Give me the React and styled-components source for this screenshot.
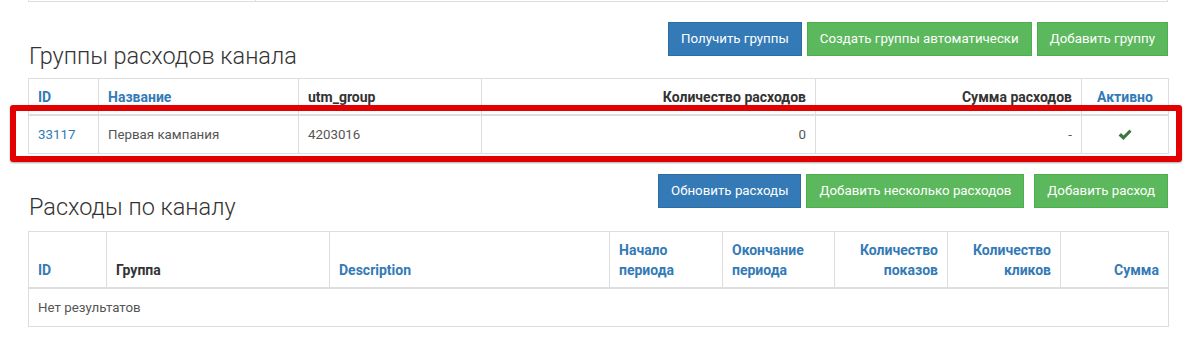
import React from 'react'
import styled, { createGlobalStyle } from 'styled-components'

const GlobalStyle = createGlobalStyle`
  body {
    margin: 0;
    background: #ffffff;
    font-family: Roboto, "Liberation Sans", Arial, sans-serif;
    font-size: 13.3px;
    line-height: 20px;
    color: #555555;
  }
  * { box-sizing: border-box; }
`

const Page = styled.div`
  width: 1140px;
  margin-left: 28px;
`

const PrevTable = styled.div`
  display: flex;
  height: 2px;
  border: 1px solid #dddddd;
  border-top: none;
`

const PrevCell = styled.div`
  width: ${p => p.$w || 'auto'};
  flex: ${p => (p.$w ? 'none' : 1)};
  border-right: ${p => (p.$last ? 'none' : '1px solid #dddddd')};
`

const Section = styled.section`
  margin-top: ${p => p.$top || 20}px;
`

const TitleBar = styled.div`
  display: flex;
  justify-content: space-between;
  align-items: flex-start;
  margin-bottom: ${p => p.$gap || 10}px;
`

const Title = styled.h3`
  margin: ${p => p.$top || 22}px 0 0 1px;
  font-size: 23.5px;
  line-height: 24px;
  font-weight: 300;
  color: #333333;
`

const Toolbar = styled.div`
  display: flex;
  gap: 5px;
`

const Button = styled.button`
  height: 34px;
  padding: 6px 12px;
  margin-left: ${p => p.$push || 0}px;
  border: 1px solid ${p => (p.$variant === 'primary' ? '#2e6da4' : '#4cae4c')};
  background: ${p => (p.$variant === 'primary' ? '#337ab7' : '#5cb85c')};
  color: #ffffff;
  font-family: inherit;
  font-size: 13.3px;
  line-height: 20px;
  border-radius: 0;
  cursor: pointer;
  white-space: nowrap;
`

const TableWrap = styled.div`
  position: relative;
`

const Table = styled.table`
  width: 100%;
  table-layout: fixed;
  border-collapse: collapse;
  border: 1px solid #dddddd;
`

const Th = styled.th`
  padding: 8px 9px 7px;
  border: 1px solid #dddddd;
  border-bottom: 2px solid #dddddd;
  vertical-align: bottom;
  text-align: ${p => p.$align || 'left'};
  font-size: 14px;
  font-weight: 700;
  color: ${p => (p.$link ? '#337ab7' : '#333333')};
`

const Td = styled.td`
  padding: 9px 9px 8px;
  border: 1px solid #dddddd;
  vertical-align: middle;
  text-align: ${p => p.$align || 'left'};
  color: ${p => (p.$link ? '#337ab7' : '#555555')};
`

const Highlight = styled.div`
  position: absolute;
  top: 27px;
  left: -18px;
  right: -14px;
  height: 57px;
  border: 6px solid #e30000;
  border-radius: 3px;
  box-shadow: 0 1px 2px rgba(0, 0, 0, 0.35);
  pointer-events: none;
`

const Check = () => (
  <svg width="14" height="12" viewBox="0 0 14 12" style={{ verticalAlign: 'middle' }}>
    <path d="M0.5 6.5 L3 4 L5.5 6.5 L11.5 0.5 L13.5 2.8 L5.5 11 Z" fill="#3c763d" />
  </svg>
)

const groupCols = [70, 200, 183, 334, 266, 87]
const costCols = [78, 223, 280, 113, 112, 113, 113, 108]

export default function App() {
  return (
    <>
      <GlobalStyle />
      <Page>
        <PrevTable>
          <PrevCell $w="227px" />
          <PrevCell $last />
        </PrevTable>

        <Section>
          <TitleBar>
            <Title>Группы расходов канала</Title>
            <Toolbar>
              <Button $variant="primary">Получить группы</Button>
              <Button>Создать группы автоматически</Button>
              <Button>Добавить группу</Button>
            </Toolbar>
          </TitleBar>
          <TableWrap>
            <Table>
              <colgroup>
                {groupCols.map((w, i) => <col key={i} style={{ width: w }} />)}
              </colgroup>
              <thead>
                <tr>
                  <Th $link>ID</Th>
                  <Th $link>Название</Th>
                  <Th>utm_group</Th>
                  <Th $align="right">Количество расходов</Th>
                  <Th $align="right">Сумма расходов</Th>
                  <Th $link $align="center">Активно</Th>
                </tr>
              </thead>
              <tbody>
                <tr>
                  <Td $link>33117</Td>
                  <Td>Первая кампания</Td>
                  <Td>4203016</Td>
                  <Td $align="right">0</Td>
                  <Td $align="right">-</Td>
                  <Td $align="center"><Check /></Td>
                </tr>
              </tbody>
            </Table>
            <Highlight />
          </TableWrap>
        </Section>

        <Section $top={20}>
          <TitleBar $gap={12}>
            <Title $top={21}>Расходы по каналу</Title>
            <Toolbar>
              <Button $variant="primary">Обновить расходы</Button>
              <Button>Добавить несколько расходов</Button>
              <Button $push={5}>Добавить расход</Button>
            </Toolbar>
          </TitleBar>
          <Table>
            <colgroup>
              {costCols.map((w, i) => <col key={i} style={{ width: w }} />)}
            </colgroup>
            <thead>
              <tr>
                <Th $link>ID</Th>
                <Th>Группа</Th>
                <Th $link>Description</Th>
                <Th $link>Начало периода</Th>
                <Th $link>Окончание периода</Th>
                <Th $link $align="right">Количество показов</Th>
                <Th $link $align="right">Количество кликов</Th>
                <Th $link $align="right">Сумма</Th>
              </tr>
            </thead>
            <tbody>
              <tr>
                <Td colSpan={8}>Нет результатов</Td>
              </tr>
            </tbody>
          </Table>
        </Section>
      </Page>
    </>
  )
}
